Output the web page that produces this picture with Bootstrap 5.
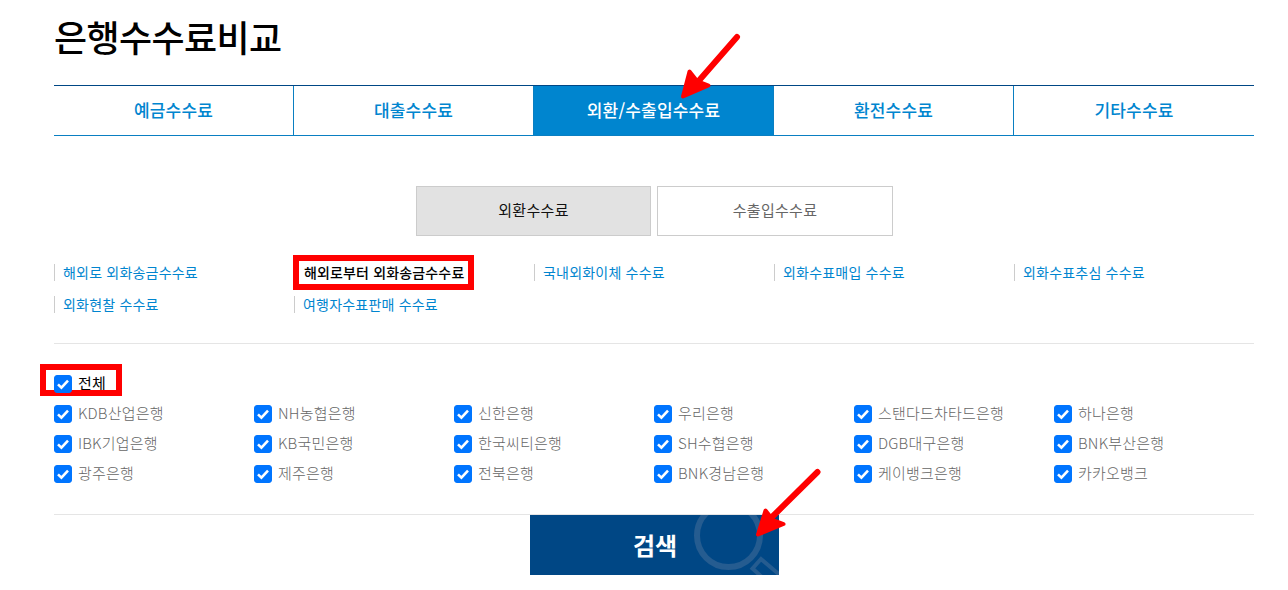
<!DOCTYPE html>
<html lang="ko">
<head>
    <meta charset="UTF-8">
    <title>은행수수료비교</title>
    <meta name="viewport" content="width=device-width, initial-scale=1">
    <link href="https://cdn.jsdelivr.net/npm/bootstrap@5.3.0/dist/css/bootstrap.min.css" rel="stylesheet">
    <style>
        body { font-family: "Noto Sans CJK KR", "Liberation Sans", sans-serif; background: #fff; overflow: hidden; }
        .page-wrap { width: 1200px; margin-left: 54px; }
        .page-title { font-size: 36px; font-weight: 500; line-height: 52px; letter-spacing: -.6px; color: #000; margin: 10px 0 23px; }
        .main-tabs { border-top: 1px solid #004785; border-bottom: 1px solid #0a7fc2; height: 51px; }
        .main-tabs a { width: 240px; height: 49px; line-height: 47px; text-align: center; color: #0085cf; font-size: 17px; font-weight: 500; text-decoration: none; border-right: 1px solid #0a7fc2; letter-spacing: .2px; }
        .main-tabs a:last-child { border-right: 0; }
        .main-tabs a.on { background: #0085cf; color: #fff; }
        .sub-tabs { margin: 50px 0 0 362px; gap: 6px; }
        .sub-tabs a { width: 236px; height: 50px; line-height: 45px; text-align: center; border: 1px solid #ccc; font-size: 15px; color: #666; text-decoration: none; letter-spacing: .3px; }
        .sub-tabs a.on { width: 235px; background: #e2e2e2; color: #111; }
        .fee-links { margin-top: 20px; padding-bottom: 23px; border-bottom: 1px solid #e5e5e5; flex-wrap: wrap; }
        .fee-links div { width: 240px; height: 32px; display: flex; align-items: center; }
        .fee-links a { border-left: 1px solid #ccc; padding-left: 8px; height: 17px; line-height: 17px; font-size: 14px; color: #0085cf; text-decoration: none; letter-spacing: .2px; }
        .fee-links a.on { width: 169px; height: 23px; line-height: 22px; margin-left: 5px; padding-left: 5px; color: #000; font-weight: 500; border-left: 0; outline: 6px solid #f00; background: #fff; white-space: nowrap; letter-spacing: .15px; }
        .bank-form { padding-top: 25px; padding-bottom: 25px; border-bottom: 1px solid #e5e5e5; }
        .bank-all { height: 30px; display: flex; align-items: center; }
        .bank-grid { display: grid; grid-template-columns: repeat(6, 200px); grid-auto-rows: 30px; }
        .bank-item { display: flex; align-items: center; gap: 6px; padding-bottom: 2px; font-size: 15px; font-weight: 300; color: #666; letter-spacing: .2px; margin: 0; }
        .bank-item .form-check-input { width: 18px; height: 18px; margin: 2px 0 0; flex: none; border-radius: 3px; background-color: #0075ff; border-color: #0075ff; background-size: 16px; background-image: url("data:image/svg+xml,%3csvg xmlns='http://www.w3.org/2000/svg' viewBox='0 0 16 16'%3e%3cpath fill='none' stroke='%23fff' stroke-width='2.6' d='M3 8.4l3.4 3.2L13 4.6'/%3e%3c/svg%3e"); }
        .bank-item.all-item { color: #000; font-weight: 400; position: relative; }
        .all-item .form-check-input { position: relative; z-index: 1; }
        .all-item::before { content: ""; position: absolute; left: -14px; top: -8px; width: 82px; height: 32px; border: 6px solid #f00; }
        .search-btn { display: block; width: 249px; height: 60px; margin: 0 auto; background: #004785; color: #fff; border: 0; border-radius: 0; font-size: 24px; font-weight: 700; position: relative; overflow: hidden; padding: 0 0 0 2px; }
        .search-btn:hover { background: #004785; color: #fff; }
        .search-btn svg { position: absolute; left: 0; top: 0; }
        .search-btn span { position: relative; }
        .notes { position: absolute; left: 0; top: 0; pointer-events: none; }
    </style>
</head>
<body>
<div class="page-wrap">
    <h1 class="page-title">은행수수료비교</h1>

    <nav class="main-tabs d-flex">
        <a href="#">예금수수료</a>
        <a href="#">대출수수료</a>
        <a href="#" class="on">외환/수출입수수료</a>
        <a href="#">환전수수료</a>
        <a href="#">기타수수료</a>
    </nav>

    <div class="sub-tabs d-flex">
        <a href="#" class="on">외환수수료</a>
        <a href="#">수출입수수료</a>
    </div>

    <div class="fee-links d-flex">
        <div><a href="#">해외로 외화송금수수료</a></div>
        <div><a href="#" class="on">해외로부터 외화송금수수료</a></div>
        <div><a href="#">국내외화이체 수수료</a></div>
        <div><a href="#">외화수표매입 수수료</a></div>
        <div><a href="#">외화수표추심 수수료</a></div>
        <div><a href="#">외화현찰 수수료</a></div>
        <div><a href="#">여행자수표판매 수수료</a></div>
    </div>

    <form class="bank-form">
        <div class="bank-all">
            <label class="bank-item all-item"><input class="form-check-input" type="checkbox" checked>전체</label>
        </div>
        <div class="bank-grid" id="bank-grid"></div>
    </form>

    <button type="button" class="btn search-btn">
        <svg width="249" height="60" viewBox="0 0 249 60" fill="none" stroke="#255c90">
            <circle cx="198.500" cy="20.500" r="31.500" stroke-width="6"/>
            <path d="M222.500 53.500L231 44L264 72L255 83z" stroke-width="4"/>
        </svg>
        <span>검색</span>
    </button>
</div>

<svg class="notes" width="1288" height="590" viewBox="0 0 1288 590" fill="#f00" stroke="#f00" stroke-linecap="round" stroke-linejoin="round">
    <path d="M737 37L696 84" fill="none" stroke-width="6"/>
    <path d="M689.500 71.500L683 96.500L708.500 85.500L697 81z" stroke-width="4"/>
    <path d="M817.500 472L769 520" fill="none" stroke-width="6"/>
    <path d="M765.500 510.500L758 534.500L783.500 524L773 520z" stroke-width="4"/>
</svg>

<script>
    const bancos = [
        "KDB산업은행", "NH농협은행", "신한은행", "우리은행", "스탠다드차타드은행", "하나은행",
        "IBK기업은행", "KB국민은행", "한국씨티은행", "SH수협은행", "DGB대구은행", "BNK부산은행",
        "광주은행", "제주은행", "전북은행", "BNK경남은행", "케이뱅크은행", "카카오뱅크"
    ];
    document.getElementById("bank-grid").innerHTML = bancos.map(b =>
        `<label class="bank-item"><input class="form-check-input" type="checkbox" checked>${b}</label>`
    ).join("");
</script>
<script src="https://cdn.jsdelivr.net/npm/bootstrap@5.3.0/dist/js/bootstrap.bundle.min.js"></script>
</body>
</html>
